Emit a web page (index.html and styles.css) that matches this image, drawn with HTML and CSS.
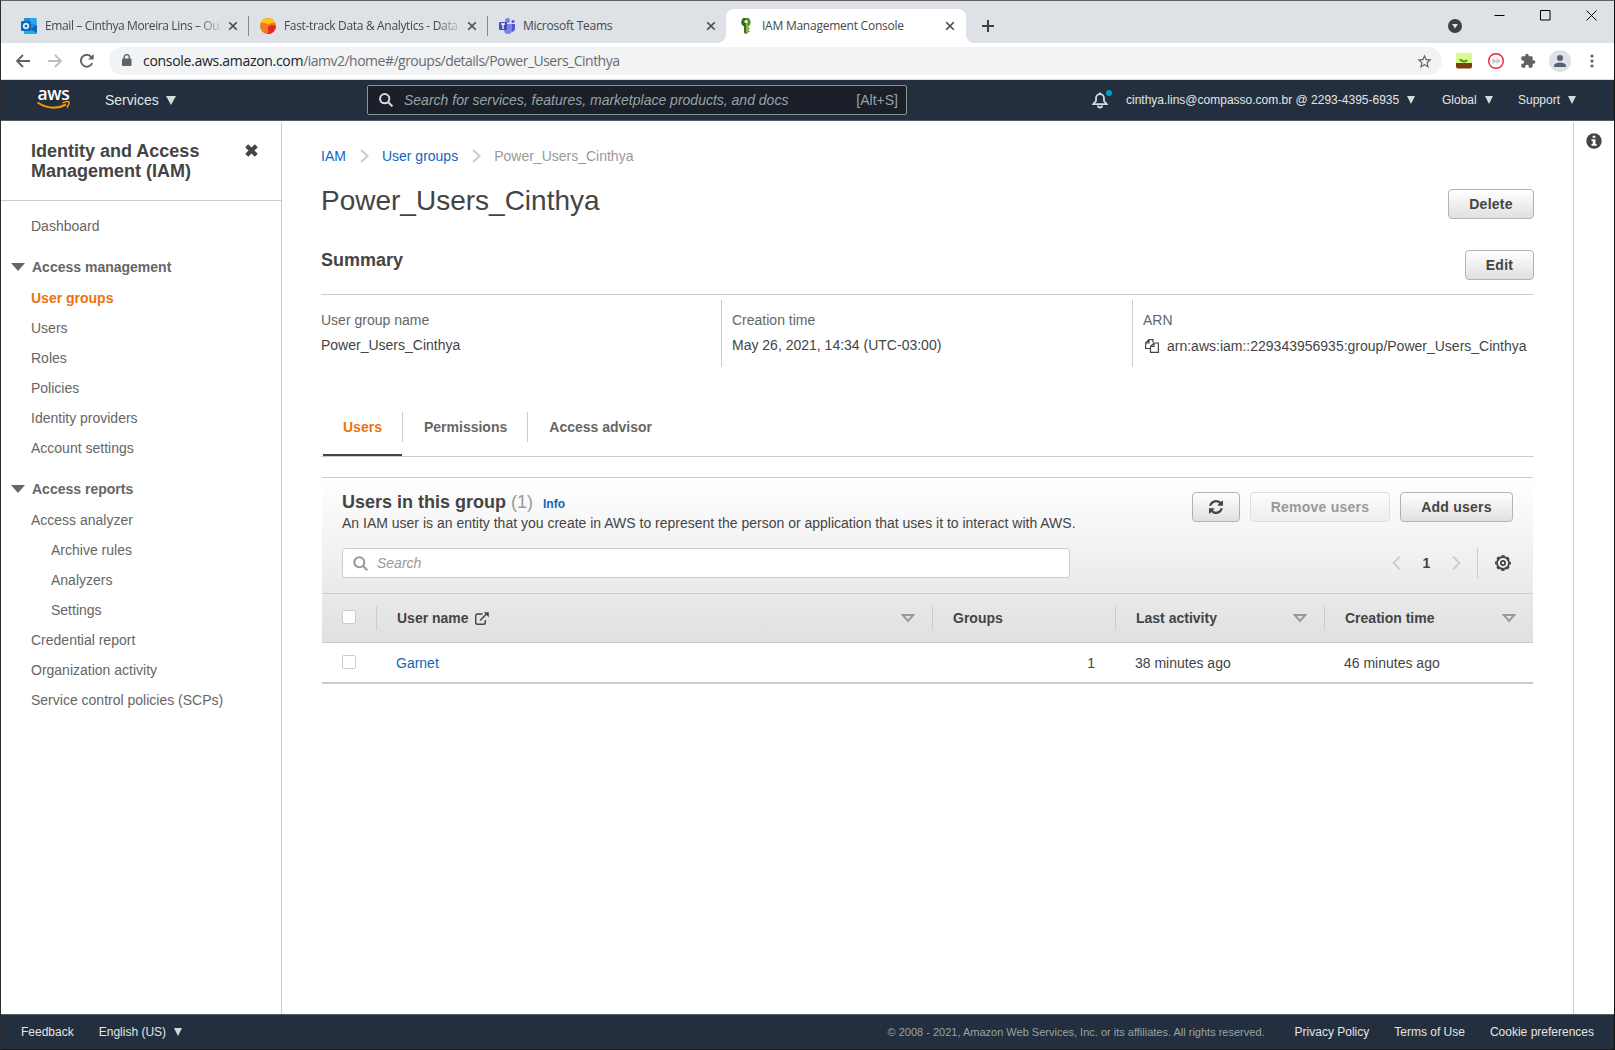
FILE: index.html
```html
<!DOCTYPE html>
<html lang="en">
<head>
<meta charset="utf-8">
<title>IAM Management Console</title>
<link rel="stylesheet" href="styles.css">
</head>
<body>
<div class="window">
  <div class="tabstrip">
    <div class="tab tab-first">
      <svg class="fav" viewBox="0 0 16 16"><rect x="3" width="12.500" height="13" rx="1" fill="#1490df"/><path d="M9 0h6.500v6H9z" fill="#28a8ea"/><path d="M3 4h6v4H3z" fill="#0364b8"/><path d="M3 8l6 3 7-4v8a1 1 0 0 1-1 1H4a1 1 0 0 1-1-1z" fill="#28a8ea"/><path d="M9 11l7-4v8z" fill="#1066b5"/><rect y="3" width="10" height="10" rx="1" fill="#0f6cbd"/><circle cx="5" cy="8" r="2.300" fill="none" stroke="#fff" stroke-width="1.500"/></svg>
      <span class="tab-title fade">Email – Cinthya Moreira Lins – Ou</span>
      <svg class="tab-x" viewBox="0 0 10 10"><path d="M1.200 1.200l7.600 7.600M8.800 1.200L1.200 8.800"/></svg>
    </div>
    <div class="tab-sep"></div>
    <div class="tab">
      <svg class="fav" viewBox="0 0 16 16"><circle cx="8" cy="8" r="8" fill="#f47b20"/><path d="M.3 6A8 8 0 0 1 15.700 6C13 3 11 5 9 6 6 7 3 2 .3 6z" fill="#fdc70c"/><path d="M8 9c3-3 6-2 8-1a8 8 0 0 1-9 8c3-2 0-4 1-7z" fill="#e8242b"/></svg>
      <span class="tab-title fade">Fast-track Data &amp; Analytics - Data</span>
      <svg class="tab-x" viewBox="0 0 10 10"><path d="M1.200 1.200l7.600 7.600M8.800 1.200L1.200 8.800"/></svg>
    </div>
    <div class="tab-sep"></div>
    <div class="tab">
      <svg class="fav" viewBox="0 0 16 16"><circle cx="8.500" cy="2.500" r="2.500" fill="#7b83eb"/><circle cx="14" cy="3.500" r="1.600" fill="#5059c9"/><path d="M11 6h5v5a3 3 0 0 1-5 2z" fill="#5059c9"/><path d="M5 6h8v6a4 4 0 0 1-8 0z" fill="#7b83eb"/><rect y="4" width="8" height="8" rx="1" fill="#464eb8"/><path d="M2 6h4M4 6v5" stroke="#fff" stroke-width="1.300"/></svg>
      <span class="tab-title">Microsoft Teams</span>
      <svg class="tab-x" viewBox="0 0 10 10"><path d="M1.200 1.200l7.600 7.600M8.800 1.200L1.200 8.800"/></svg>
    </div>
    <div class="tab active">
      <svg class="fav" viewBox="0 0 16 16"><path d="M5 0h6l1.500 3v3L10.500 8.500v6L8 16l-2-1.500v-6L3.500 6V3z" fill="#5b8f2b"/><path d="M8 5h2v9.500L8 16z" fill="#83b34c"/><path d="M10 10h2v1.500h-2zM10 13h2v1h-2z" fill="#83b34c"/><path d="M5 0h3v16l-2-1.500v-6L3.500 6V3z" fill="#3f6b1d"/><circle cx="8" cy="3.500" r="1.600" fill="#fff"/></svg>
      <span class="tab-title">IAM Management Console</span>
      <svg class="tab-x" viewBox="0 0 10 10"><path d="M1.200 1.200l7.600 7.600M8.800 1.200L1.200 8.800"/></svg>
    </div>
    <svg class="newtab" viewBox="0 0 12 12"><path d="M6 0v12M0 6h12"/></svg>
    <svg class="tabsearch" viewBox="0 0 14 14"><circle cx="7" cy="7" r="7" fill="#3c4043"/><path d="M4 5h6L7 9.500z" fill="#dee1e6"/></svg>
    <div class="winctl">
      <svg viewBox="0 0 11 11"><path d="M.5 5.500h10"/></svg>
      <svg viewBox="0 0 11 11"><path d="M.5.500h9.500v9.500H.5z"/></svg>
      <svg viewBox="0 0 11 11"><path d="M.5.500l10 10M10.500.500l-10 10"/></svg>
    </div>
  </div>

  <div class="toolbar">
    <svg class="ti back" viewBox="0 0 14 14"><path d="M14 7H1M7 1L1 7l6 6"/></svg>
    <svg class="ti fwd" viewBox="0 0 14 14"><path d="M0 7h13M7 1l6 6-6 6"/></svg>
    <svg class="ti reload" viewBox="0 0 14 14"><path d="M12.200 9.200A5.900 5.900 0 1 1 11.200 2.800L12.500 4.200"/><path d="M13.700 0v5.600H8.100z" fill="#5f6368" stroke="none"/></svg>
    <div class="omnibox">
      <svg class="lock" viewBox="0 0 10 12"><rect y="4.500" width="9.500" height="7.500" rx="1" fill="#5f6368"/><path d="M2.200 5V3.200a2.550 2.550 0 0 1 5.100 0V5" fill="none" stroke="#5f6368" stroke-width="1.400"/></svg>
      <span class="url"><b>console.aws.amazon.com</b>/iamv2/home#/groups/details/Power_Users_Cinthya</span>
      <svg class="star" viewBox="0 0 24 24"><path fill="#5f6368" d="M22 9.240l-7.190-.62L12 2 9.190 8.630 2 9.240l5.460 4.730L5.820 21 12 17.270 18.180 21l-1.630-7.030L22 9.240zM12 15.400l-3.760 2.270 1-4.280-3.320-2.880 4.380-.38L12 6.100l1.710 4.040 4.380.38-3.320 2.880 1 4.280L12 15.400z"/></svg>
    </div>
    <svg class="ext plant" viewBox="0 0 16 16"><rect width="16" height="13" rx="2" fill="#d9fb8c"/><path d="M0 10h16v3.500a2 2 0 0 1-2 2H2a2 2 0 0 1-2-2z" fill="#7b3f0c"/><path d="M3 6q4-.5 5 2 1-2 4-1-1 2.500-4 2.500Q4 9 3 6z" fill="#4e9a1c"/></svg>
    <svg class="ext red" viewBox="0 0 16 16"><circle cx="8" cy="8" r="7.300" fill="#fff" stroke="#e8213f" stroke-width="1.400"/><path d="M4.500 5L8.500 8l-4 3zM8.500 5l4 3-4 3z" fill="#c4c4c4"/></svg>
    <svg class="ext puzzle" viewBox="0 0 24 24"><path fill="#5f6368" d="M20.500 11H19V7c0-1.100-.9-2-2-2h-4V3.500C13 2.120 11.880 1 10.500 1S8 2.120 8 3.500V5H4c-1.100 0-1.990.9-1.990 2v3.800H3.500c1.490 0 2.700 1.210 2.700 2.700s-1.210 2.700-2.700 2.700H2V20c0 1.100.9 2 2 2h3.800v-1.500c0-1.490 1.210-2.700 2.700-2.700s2.700 1.210 2.700 2.700V22H17c1.100 0 2-.9 2-2v-4h1.500c1.380 0 2.500-1.120 2.500-2.500S21.880 11 20.500 11z"/></svg>
    <svg class="avatar" viewBox="0 0 22 22"><circle cx="11" cy="11" r="11" fill="#dee1e6"/><circle cx="11" cy="8" r="3" fill="#5a6478"/><path d="M5 17v-1.500c0-2 4-3 6-3s6 1 6 3V17z" fill="#5a6478"/></svg>
    <svg class="dots" viewBox="0 0 4 14"><circle cx="2" cy="2" r="1.600"/><circle cx="2" cy="7" r="1.600"/><circle cx="2" cy="12" r="1.600"/></svg>
  </div>

  <header class="nav">
    <div class="logo"><span class="logo-text">aws</span><svg viewBox="0 0 33 9"><path d="M.5 1.500Q15 11 29 3.500" fill="none" stroke="#f90" stroke-width="2"/><path d="M25.500 1.800Q31-.2 32 1q.6 1.800-2 5.500" fill="none" stroke="#f90" stroke-width="1.500"/></svg></div>
    <div class="services">Services<i class="caret big"></i></div>
    <div class="nav-search">
      <svg viewBox="0 0 14 14"><circle cx="5.700" cy="5.700" r="4.600"/><path d="M9.200 9.200l4.200 4.200"/></svg>
      <em>Search for services, features, marketplace products, and docs</em>
      <span class="alt">[Alt+S]</span>
    </div>
    <div class="bell">
      <svg viewBox="0 0 16 17"><path d="M1.200 12.200L4 9V6.200a4 4 0 0 1 8 0V9l2.800 3.200z"/><path d="M8 2.200V.5"/><path d="M6 13.500a2 2 0 0 0 4 0"/></svg>
      <i class="bell-dot"></i>
    </div>
    <div class="acct">cinthya.lins@compasso.com.br @ 2293-4395-6935<i class="caret"></i></div>
    <div class="region">Global<i class="caret"></i></div>
    <div class="support">Support<i class="caret"></i></div>
  </header>

  <div class="body">
    <aside class="side">
      <div class="side-head">
        <h2>Identity and Access Management (IAM)</h2>
        <svg viewBox="0 0 12 12"><path d="M1.600 1.600l8.800 8.800M10.400 1.600l-8.800 8.800"/></svg>
      </div>
      <ul class="menu">
        <li>Dashboard</li>
        <li class="group"><i></i>Access management</li>
        <li class="current">User groups</li>
        <li>Users</li>
        <li>Roles</li>
        <li>Policies</li>
        <li>Identity providers</li>
        <li>Account settings</li>
        <li class="group"><i></i>Access reports</li>
        <li>Access analyzer</li>
        <li class="sub">Archive rules</li>
        <li class="sub">Analyzers</li>
        <li class="sub">Settings</li>
        <li>Credential report</li>
        <li>Organization activity</li>
        <li>Service control policies (SCPs)</li>
      </ul>
    </aside>

    <main class="main">
      <nav class="crumbs">
        <a>IAM</a>
        <svg viewBox="0 0 9 14"><path d="M1 1l6.500 6L1 13"/></svg>
        <a>User groups</a>
        <svg viewBox="0 0 9 14"><path d="M1 1l6.500 6L1 13"/></svg>
        <span>Power_Users_Cinthya</span>
      </nav>
      <div class="title-row"><h1>Power_Users_Cinthya</h1><button class="btn delete">Delete</button></div>
      <div class="summary-row"><h2>Summary</h2><button class="btn edit">Edit</button></div>
      <div class="summary">
        <div class="field"><label>User group name</label><p>Power_Users_Cinthya</p></div>
        <div class="field"><label>Creation time</label><p>May 26, 2021, 14:34 (UTC-03:00)</p></div>
        <div class="field"><label>ARN</label><p class="arn"><svg viewBox="0 0 14 14"><path d="M5.500 9.500H.6V4L4 .6h4v3M4 .6V4H.6"/><path d="M5.500 7.500L9 4h4.400v9.400H5.500zM9 4v3.500H5.500"/></svg>arn:aws:iam::229343956935:group/Power_Users_Cinthya</p></div>
      </div>
      <div class="tabs">
        <div class="t on">Users</div>
        <div class="t">Permissions</div>
        <div class="t">Access advisor</div>
      </div>

      <section class="panel">
        <div class="panel-top">
          <div class="panel-head">
            <div>
              <h3>Users in this group <span>(1)</span><a>Info</a></h3>
              <p>An IAM user is an entity that you create in AWS to represent the person or application that uses it to interact with AWS.</p>
            </div>
            <div class="actions">
              <button class="btn refresh"><svg viewBox="0 0 1536 1536"><path fill="#444" d="M1511 928q0 5-1 7-64 268-268 434.500T764 1536q-146 0-282.500-55T238 1324l-129 129q-19 19-45 19t-45-19-19-45V960q0-26 19-45t45-19h448q26 0 45 19t19 45-19 45l-137 137q71 66 161 102t187 36q134 0 250-65t186-179q11-17 53-117 8-23 30-23h192q13 0 22.500 9.500t9.500 22.500zm25-800v448q0 26-19 45t-45 19h-448q-26 0-45-19t-19-45 19-45l138-138Q969 256 768 256q-134 0-250 65T332 500q-11 17-53 117-8 23-30 23H50q-13 0-22.500-9.500T18 608v-7q65-268 270-434.500T768 0q146 0 284 55.500T1297 212l130-129q19-19 45-19t45 19 19 45z"/></svg></button>
              <button class="btn remove" disabled>Remove users</button>
              <button class="btn add">Add users</button>
            </div>
          </div>
          <div class="tools">
            <div class="search"><svg viewBox="0 0 15 15"><circle cx="6.300" cy="6.300" r="5"/><path d="M10 10l4.300 4.300"/></svg><em>Search</em></div>
            <div class="pager">
              <svg class="chev" viewBox="0 0 9 14"><path d="M8 .5L1.500 7 8 13.500"/></svg>
              <b>1</b>
              <svg class="chev" viewBox="0 0 9 14"><path d="M1 .5L7.500 7 1 13.500"/></svg>
              <div class="gear"><svg viewBox="0 0 16 16"><circle cx="8" cy="8" r="6" stroke-width="1.800"/><circle cx="8" cy="8" r="7.200" stroke-width="1.500" stroke-dasharray="3.100 2.555" stroke-dashoffset="1.550"/><circle cx="8" cy="8" r="2.100" stroke-width="1.800"/></svg></div>
            </div>
          </div>
        </div>
        <div class="row thead">
          <div class="c-check"><i class="box"></i></div>
          <div class="th">User name<svg class="extlink" viewBox="0 0 14 13"><path d="M7.500 2H2.500Q.7 2 .7 3.800v6.700q0 1.800 1.800 1.800h6q1.800 0 1.800-1.800V8"/><path d="M5 8.500L11.500 2"/><path d="M8.800.2H13.800V5.200z" fill="#444" stroke="none"/></svg><svg class="sort" viewBox="0 0 14 9"><path d="M1.800 1h10.400L7 7z"/></svg></div>
          <div class="th">Groups</div>
          <div class="th">Last activity<svg class="sort" viewBox="0 0 14 9"><path d="M1.800 1h10.400L7 7z"/></svg></div>
          <div class="th">Creation time<svg class="sort" viewBox="0 0 14 9"><path d="M1.800 1h10.400L7 7z"/></svg></div>
        </div>
        <div class="row trow">
          <div class="c-check"><i class="box"></i></div>
          <div class="td"><a>Garnet</a></div>
          <div class="td num">1</div>
          <div class="td">38 minutes ago</div>
          <div class="td">46 minutes ago</div>
        </div>
      </section>
    </main>

    <aside class="rail"><svg viewBox="0 0 16 16"><circle cx="8" cy="8" r="7.700" fill="#444"/><path d="M6.600 2.700h2.800v2.100H6.600zM5.500 6.200h4v4.900h1.200v1.700H5.500v-1.700h1.200V7.900H5.500z" fill="#fff"/></svg></aside>
  </div>

  <footer class="foot">
    <span class="fb">Feedback</span>
    <span class="lang">English (US)<i class="caret"></i></span>
    <span class="copy">© 2008 - 2021, Amazon Web Services, Inc. or its affiliates. All rights reserved.</span>
    <span class="pp">Privacy Policy</span>
    <span class="tou">Terms of Use</span>
    <span class="cp">Cookie preferences</span>
  </footer>
</div>
</body>
</html>
```
FILE: styles.css
```css
* { box-sizing: border-box; }
body { margin: 0; font-family: "Liberation Sans", Arial, sans-serif; font-size: 14px; color: #444; background: #fff; }
h1, h2, h3, p, ul { margin: 0; padding: 0; }
svg { display: block; flex: none; }
a { color: #16b; }

.window { width: 1615px; height: 1050px; display: flex; flex-direction: column; overflow: hidden; border: 1px solid #2b2b31; border-top-color: #626266; border-right-color: #111; border-bottom-color: #16191f; }

/* Browser tabs */
.tabstrip { height: 42px; flex: none; background: #dee1e6; display: flex; align-items: center; padding-top: 8px; font-family: "Open Sans", "Noto Sans", sans-serif; font-size: 12px; color: #45494d; }
.tab { display: flex; align-items: center; height: 34px; width: 238px; padding: 0 10px 0 11px; }
.tab-first { width: 247px; padding-left: 20px; }
.fav { width: 16px; height: 16px; margin-right: 8px; }
.tab-title { flex: 1; min-width: 0; white-space: nowrap; letter-spacing: -0.24px; margin-right: 9px; padding-bottom: 2px; }
.fade { margin-right: 7px; letter-spacing: -0.33px; -webkit-mask-image: linear-gradient(90deg, #000 86%, rgba(0, 0, 0, .15)); mask-image: linear-gradient(90deg, #000 86%, rgba(0, 0, 0, .15)); }
.tab-first .fade { letter-spacing: -0.38px; }
.tab-x { width: 10px; height: 10px; fill: none; stroke: #45494d; stroke-width: 1.6; }
.tab-sep { width: 1px; height: 20px; background: #85888c; }
.active { position: relative; width: 240px; background: #fff; border-radius: 8px 8px 0 0; padding: 0 11px 0 12px; }
.active::before, .active::after { content: ""; position: absolute; bottom: 0; width: 8px; height: 8px; }
.active::before { left: -8px; background: radial-gradient(circle at 0 0, transparent 7.5px, #fff 8px); }
.active::after { right: -8px; background: radial-gradient(circle at 100% 0, transparent 7.5px, #fff 8px); }
.newtab { width: 12px; height: 12px; margin-left: 16px; stroke: #3c4043; stroke-width: 2; }
.tabsearch { width: 14px; height: 14px; margin-left: auto; margin-right: 32px; }
.winctl { display: flex; gap: 35px; margin: -22px 17px 0 0; }
.winctl svg { width: 11px; height: 11px; fill: none; stroke: #000; stroke-width: 1; }

/* Address bar */
.toolbar { height: 37px; flex: none; background: #fff; border-bottom: 1px solid #dadce0; display: flex; align-items: center; padding-left: 15px; }
.ti { width: 14px; height: 14px; fill: none; stroke: #5f6368; stroke-width: 1.9; }
.fwd { margin-left: 18px; stroke: #bbbdc0; }
.reload { margin-left: 18px; }
.omnibox { width: 1333px; height: 28px; margin-left: 15px; border-radius: 14px; background: #f1f3f4; display: flex; align-items: center; padding: 0 10px 0 13px; }
.lock { width: 10px; height: 12px; margin-top: -2px; }
.url { flex: 1; margin-left: 11px; padding-bottom: 1px; font-family: "Open Sans", "Noto Sans", sans-serif; font-size: 14px; letter-spacing: -0.51px; color: #686c70; white-space: nowrap; }
.url b { font-weight: 400; letter-spacing: -0.3px; color: #202124; }
.star { width: 17px; height: 17px; margin-right: -1px; }
.ext { width: 16px; height: 16px; }
.plant { margin-left: 14px; }
.red { margin-left: 16px; }
.puzzle { margin-left: 16px; }
.avatar { width: 22px; height: 22px; margin-left: 13px; }
.dots { width: 4px; height: 14px; margin-left: 19px; fill: #5f6368; }

/* Console navigation */
.nav { height: 41px; flex: none; background: #232f3e; border-bottom: 1px solid #545b64; display: flex; align-items: center; color: #e4e6e6; font-size: 12px; white-space: nowrap; }
.logo { width: 33px; margin-left: 36px; margin-right: 1px; text-align: center; }
.logo-text { display: block; font: 600 17.5px/12px "Open Sans", sans-serif; height: 14px; margin-top: -3px; letter-spacing: -0.3px; color: #fff; }
.logo svg { width: 33px; height: 9px; }
.caret { display: inline-block; margin-left: 8px; border: 4.5px solid transparent; border-top: 8px solid #d5dbdb; border-bottom: 0; }
.caret.big { border-width: 9px 5px 0; margin-left: 7px; }
.services { flex: none; width: 296px; padding-left: 34px; font-size: 14px; }
.nav-search { width: 540px; height: 30px; border: 1px solid #879596; border-radius: 2px; background: #1a1f29; display: flex; align-items: center; padding: 0 8px 0 11px; font-size: 14px; color: #95a5a6; }
.nav-search svg { width: 14px; height: 14px; margin-right: 11px; fill: none; stroke: #d5dbdb; stroke-width: 2; }
.alt { margin-left: auto; }
.bell { position: relative; width: 16px; margin-left: 185px; }
.bell svg { width: 16px; height: 17px; fill: none; stroke: #d5dbdb; stroke-width: 1.8; }
.bell-dot { position: absolute; left: 14px; top: -2px; width: 6px; height: 6px; border-radius: 50%; background: #00a1c9; }
.acct { width: 316px; margin-left: 18px; }
.region { width: 76px; }

/* Layout */
.body { flex: 1; display: grid; grid-template-columns: 281px 1fr 41px; min-height: 0; padding-top: 1px; }
.side { border-right: 1px solid #ccc; }
.side-head { height: 79px; border-bottom: 1px solid #ccc; padding: 19px 23px 0 30px; display: flex; justify-content: space-between; }
.side-head h2 { width: 190px; font-size: 18px; line-height: 20px; }
.side-head svg { width: 13px; height: 13px; margin-top: 3px; stroke: #444; stroke-width: 3.9; }
.menu { list-style: none; padding: 15px 0 0 30px; color: #666; }
.menu li { line-height: 20px; margin-bottom: 10px; white-space: nowrap; }
.menu .group { display: flex; align-items: center; margin: 21px 0 11px -20px; font-weight: 700; }
.menu .group i { border: 7px solid transparent; border-top: 8px solid #666; border-bottom: 0; margin-right: 7px; }
.menu .current { color: #ec7211; font-weight: 700; }
.menu .sub { padding-left: 20px; }
.rail { border-left: 1px solid #ccc; padding: 11px 0 0 12px; }
.rail svg { width: 16px; height: 16px; }

/* Page */
.main { padding: 24px 39px 0; }
.crumbs { height: 20px; line-height: 20px; display: flex; align-items: center; }
.crumbs svg { width: 9px; height: 14px; margin: 0 13px 0 14px; fill: none; stroke: #ccc; stroke-width: 2; }
.crumbs span { color: #999; }
.title-row { display: flex; justify-content: space-between; height: 61px; margin-top: 23px; }
.title-row h1 { font-size: 28px; font-weight: 400; line-height: 32px; margin-top: -4px; }
.summary-row { display: flex; justify-content: space-between; height: 45px; border-bottom: 1px solid #ccc; }
.summary-row h2 { font-size: 18px; line-height: 20px; }
.btn { height: 30px; padding: 0; border: 1px solid #b3b3b3; border-radius: 4px; background: linear-gradient(#fff, #e0e0e0); font: 700 14px "Liberation Sans", Arial, sans-serif; letter-spacing: .25px; color: #444; }
.delete { width: 86px; }
.edit { width: 69px; }
.refresh { width: 48px; display: flex; align-items: center; justify-content: center; }
.refresh svg { width: 14px; height: 14px; }
.remove { width: 140px; color: #999; border-color: #dedede; background: linear-gradient(#fdfdfd, #ededed); }
.add { width: 113px; }
.summary { display: grid; grid-template-columns: 400px 411px 1fr; height: 67px; margin-top: 5px; }
.field { line-height: 20px; padding-top: 10px; white-space: nowrap; }
.field + .field { border-left: 1px solid #ccc; padding-left: 10px; }
.field label { display: block; color: #666; }
.field p { margin-top: 5px; }
.field .arn { display: flex; align-items: center; margin-top: 6px; padding-left: 2px; }
.arn svg { width: 14px; height: 14px; margin-right: 8px; fill: none; stroke: #444; stroke-width: 1.2; }
.tabs { height: 45px; margin-top: 45px; border-bottom: 1px solid #ccc; display: flex; font-weight: 700; color: #666; }
.t { height: 30px; line-height: 30px; padding: 0 20px 0 21px; }
.t + .t { border-left: 1px solid #ccc; }
.t.on { position: relative; width: 81px; padding-left: 22px; color: #ec7211; }
.t.on::after { content: ""; position: absolute; left: 2px; right: 0; bottom: -14px; height: 2px; background: #444; }

/* Users table */
.panel { margin: 20px 1px 0; border-top: 1px solid #ccc; border-bottom: 2px solid #ccc; background: linear-gradient(#fff, #e0e0e0 165px, #fff 165px); }
.panel-top { height: 116px; border-bottom: 1px solid #ccc; padding: 14px 20px 0; }
.panel-head { display: flex; justify-content: space-between; height: 56px; }
.panel h3 { font-size: 18px; line-height: 20px; }
.panel h3 span { font-weight: 400; color: #999; }
.panel h3 a { font-size: 12px; margin-left: 10px; }
.panel p { line-height: 20px; margin-top: -1px; white-space: nowrap; }
.actions { display: flex; gap: 10px; }
.tools { display: flex; justify-content: space-between; height: 30px; }
.search { width: 728px; border: 1px solid #ccc; border-radius: 3px; background: #fff; display: flex; align-items: center; padding-left: 10px; color: #999; }
.search svg { width: 15px; height: 15px; margin-right: 9px; fill: none; stroke: #999; stroke-width: 2.1; }
.pager { display: flex; align-items: center; }
.pager b { width: 51px; text-align: center; }
.chev { width: 9px; height: 14px; fill: none; stroke: #ccc; stroke-width: 1.9; }
.gear { height: 30px; margin-left: 16px; border-left: 1px solid #ccc; padding: 7px 2px 0 17px; }
.gear svg { width: 16px; height: 16px; fill: none; stroke: #444; }
.row { display: grid; grid-template-columns: 54px 556px 183px 209px 1fr; align-items: center; }
.thead { height: 49px; border-bottom: 1px solid #ccc; }
.trow { height: 39px; }
.c-check { padding-left: 20px; }
.box { display: block; width: 14px; height: 14px; border: 1px solid #ccc; border-radius: 2px; background: #fff; margin-top: -2px; }
.th { height: 24px; border-left: 1px solid #ccc; padding: 0 17px 0 20px; font-weight: 700; display: flex; align-items: center; }
.sort { width: 14px; height: 9px; margin-left: auto; fill: none; stroke: #999; stroke-width: 2; }
.extlink { width: 14px; height: 13px; margin-left: 6px; fill: none; stroke: #444; stroke-width: 1.4; }
.td { padding-left: 20px; line-height: 20px; }
.num { text-align: right; padding-right: 20px; }

/* Footer */
.foot { height: 35px; flex: none; background: #232f3e; border-top: 1px solid #545b64; color: #e4e6e6; display: flex; align-items: center; font-size: 12px; padding: 0 20px; white-space: nowrap; }
.foot .caret { border-top-color: #d5dbdb; }
.lang { margin-left: 25px; }
.copy { margin-left: auto; margin-right: 30px; font-size: 11px; color: #95a5a6; }
.tou { margin: 0 25px; }
```
